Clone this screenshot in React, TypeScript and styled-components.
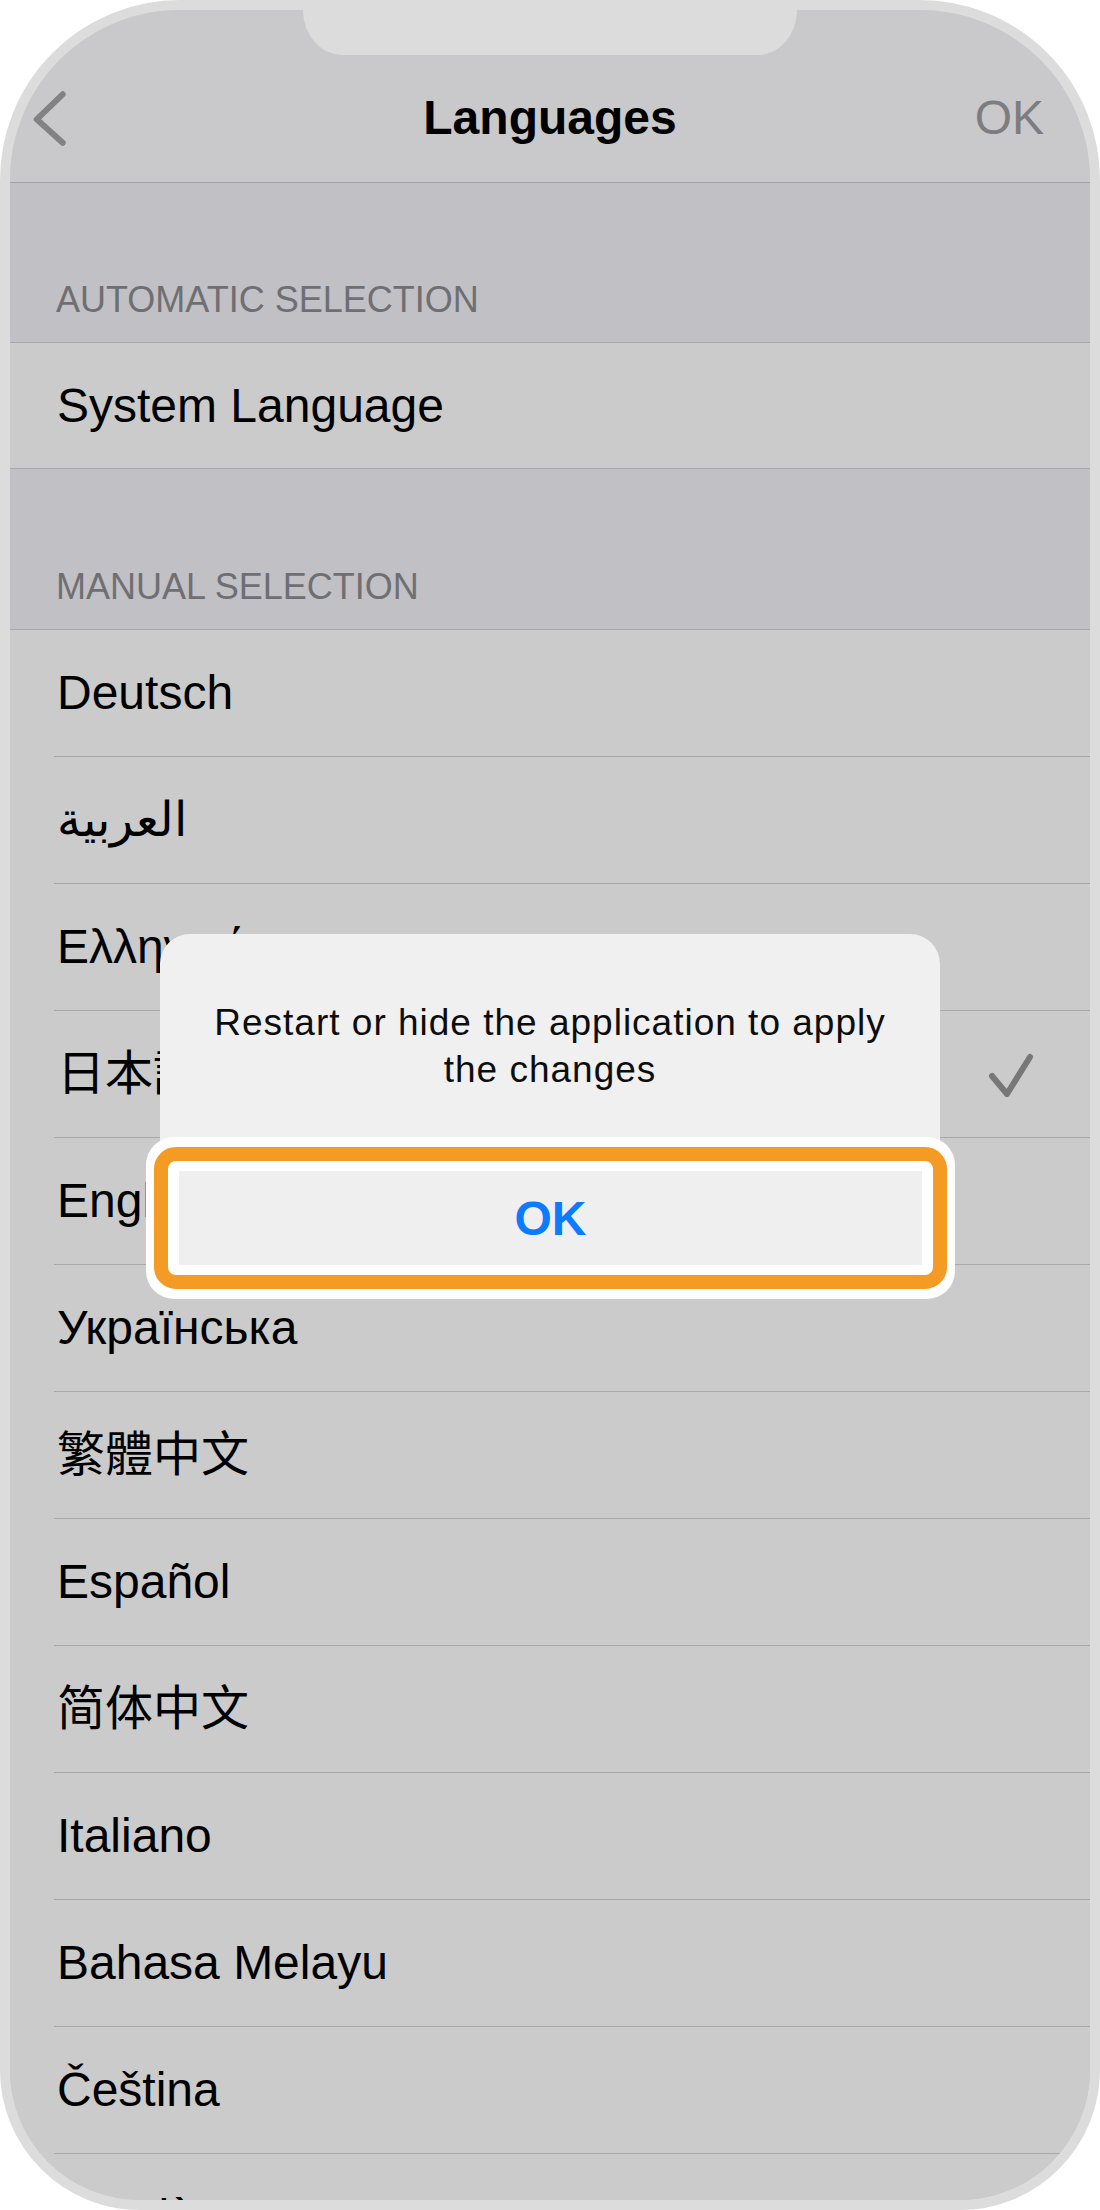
import React from "react";
import styled, { createGlobalStyle } from "styled-components";

const GlobalStyle = createGlobalStyle`
  html, body {
    margin: 0;
    padding: 0;
    background: #ffffff;
  }
  body {
    font-family: "Liberation Sans", Arial, "Noto Sans CJK SC", sans-serif;
  }
`;

const Phone = styled.div`
  position: relative;
  width: 1100px;
  height: 2210px;
  box-sizing: border-box;
  border: 10px solid #dcdcdc;
  border-radius: 180px 180px 140px 140px;
  overflow: hidden;
  background: #cbcbcb;
`;

const Notch = styled.div`
  position: absolute;
  top: 0;
  left: 293px;
  width: 494px;
  height: 45px;
  background: #dcdcdc;
  border-radius: 0 0 40px 40px / 0 0 46px 46px;
  z-index: 3;
`;

const Screen = styled.div`
  display: flex;
  flex-direction: column;
  height: 100%;
`;

const NavBar = styled.header`
  flex: none;
  height: 173px;
  box-sizing: border-box;
  padding: 80px 25px 36px;
  background: #c9c9cb;
  border-bottom: 1px solid #a2a2a4;
  display: grid;
  grid-template-columns: 1fr auto 1fr;
  align-items: center;
`;

const BackButton = styled.div`
  justify-self: start;
  height: 56px;
  display: flex;
  align-items: center;
  margin-left: -3px;
`;

const Title = styled.h1`
  margin: 0;
  font-size: 48px;
  line-height: 56px;
  font-weight: 700;
  color: #000000;
  text-align: center;
`;

const NavAction = styled.div`
  justify-self: end;
  margin-right: 21px;
  font-size: 48px;
  line-height: 56px;
  color: #7d7d7f;
`;

const SectionHeader = styled.div<{ $height: number }>`
  flex: none;
  height: ${(p) => p.$height}px;
  box-sizing: border-box;
  padding: 0 46px 24px;
  background: #c1c0c4;
  border-bottom: 1px solid #a8a8ab;
  display: flex;
  align-items: flex-end;
  font-size: 36px;
  line-height: 36px;
  color: #6f6f73;
  text-transform: uppercase;
`;

const Row = styled.div<{ $inset: boolean }>`
  flex: none;
  padding-left: ${(p) => (p.$inset ? 44 : 0)}px;
  background: #cbcbcb;
`;

const RowInner = styled.div<{ $inset: boolean; $height: number }>`
  height: ${(p) => p.$height}px;
  box-sizing: border-box;
  border-bottom: 1px solid #a9a9a9;
  padding-left: ${(p) => (p.$inset ? 3 : 47)}px;
  padding-right: 56px;
  display: flex;
  align-items: center;
  justify-content: space-between;
`;

const RowLabel = styled.span`
  font-size: 48px;
  line-height: 1;
  color: #000000;
  white-space: nowrap;
`;

const Overlay = styled.div`
  position: absolute;
  inset: 0;
  z-index: 2;
  display: flex;
  flex-direction: column;
  align-items: center;
  padding-top: 924px;
`;

const Alert = styled.div`
  width: 780px;
  background: #f0f0f0;
  border-radius: 30px;
  display: flex;
  flex-direction: column;
`;

const AlertMessage = styled.p`
  margin: 0;
  padding: 65px 40px 44px;
  font-size: 37px;
  line-height: 47px;
  letter-spacing: 1px;
  text-align: center;
  color: #0d0d0d;
`;

const Highlight = styled.div`
  margin: 0 -15px 0 -14px;
  padding: 10px 8px;
  background: #ffffff;
  border-radius: 28px;
`;

const HighlightRing = styled.div`
  border: 14px solid #f39b24;
  border-radius: 22px;
  background: #ffffff;
  padding: 10px 11px;
`;

const AlertButton = styled.button`
  display: flex;
  align-items: center;
  justify-content: center;
  width: 100%;
  height: 94px;
  margin: 0;
  padding: 0;
  border: none;
  background: #efefef;
  font-family: "Liberation Sans", Arial, sans-serif;
  font-size: 48px;
  font-weight: 700;
  color: #0b7bff;
`;

const ChevronLeft = () => (
  <svg width="36" height="55" viewBox="0 0 36 55" fill="none">
    <path
      d="M30.7 3.3 L4.7 28.3 L30.7 51.7"
      stroke="#828284"
      strokeWidth="6"
      strokeLinecap="round"
      strokeLinejoin="round"
    />
  </svg>
);

const Check = () => (
  <svg width="46" height="46" viewBox="0 0 46 46" fill="none">
    <path
      d="M4 25 L19 43 L42 6"
      stroke="#777777"
      strokeWidth="6"
      strokeLinecap="round"
      strokeLinejoin="round"
    />
  </svg>
);

const languages: { name: string; lang?: string; selected?: boolean }[] = [
  { name: "Deutsch" },
  { name: "العربية", lang: "ar" },
  { name: "Ελληνικά" },
  { name: "日本語", lang: "ja", selected: true },
  { name: "English" },
  { name: "Українська" },
  { name: "繁體中文", lang: "zh-Hant" },
  { name: "Español" },
  { name: "简体中文", lang: "zh-Hans" },
  { name: "Italiano" },
  { name: "Bahasa Melayu" },
  { name: "Čeština" },
  { name: "Català" },
];

export default function App() {
  return (
    <>
      <GlobalStyle />
      <Phone>
        <Notch />
        <Screen>
          <NavBar>
            <BackButton>
              <ChevronLeft />
            </BackButton>
            <Title>Languages</Title>
            <NavAction>OK</NavAction>
          </NavBar>

          <SectionHeader $height={160}>Automatic Selection</SectionHeader>
          <Row $inset={false}>
            <RowInner $inset={false} $height={126}>
              <RowLabel>System Language</RowLabel>
            </RowInner>
          </Row>

          <SectionHeader $height={161}>Manual Selection</SectionHeader>
          {languages.map((l) => (
            <Row $inset key={l.name}>
              <RowInner $inset $height={127}>
                <RowLabel lang={l.lang}>{l.name}</RowLabel>
                {l.selected && <Check />}
              </RowInner>
            </Row>
          ))}
        </Screen>

        <Overlay>
          <Alert>
            <AlertMessage>
              Restart or hide the application to apply the changes
            </AlertMessage>
            <Highlight>
              <HighlightRing>
                <AlertButton>OK</AlertButton>
              </HighlightRing>
            </Highlight>
          </Alert>
        </Overlay>
      </Phone>
    </>
  );
}
